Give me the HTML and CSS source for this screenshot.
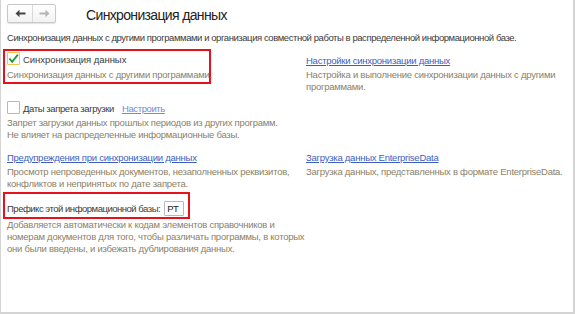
FILE: index.html
```html
<!DOCTYPE html>
<html lang="ru">
<head>
  <meta charset="UTF-8">
  <title>Синхронизация данных</title>
  <link rel="stylesheet" href="styles.css">
</head>
<body>
  <div class="window">
    <!-- Шапка формы -->
    <div class="header">
      <div class="nav">
        <button class="nav-btn">
          <svg width="11" height="9" viewBox="0 0 11 9"><path d="M0.5 4.5 L4.5 0.8 L4.5 3.4 L10.5 3.4 L10.5 5.6 L4.5 5.6 L4.5 8.2 Z" fill="#444"/></svg>
        </button>
        <button class="nav-btn">
          <svg width="11" height="9" viewBox="0 0 11 9"><path d="M10.5 4.5 L6.5 0.8 L6.5 3.6 L0.5 3.6 L0.5 5.4 L6.5 5.4 L6.5 8.2 Z" fill="#b5b5b5"/></svg>
        </button>
      </div>
      <h1>Синхронизация данных</h1>
    </div>

    <p class="intro">Синхронизация данных с другими программами и организация совместной работы в распределенной информационной базе.</p>

    <div class="grid">
      <div class="cell">
        <div class="highlight hl-sync">
          <label class="check">
            <span class="box checked">
              <svg width="12" height="11" viewBox="0 0 12 11"><path d="M1.5 5.5 L4.5 9 L10.8 1.2" fill="none" stroke="#1d9b3a" stroke-width="2"/></svg>
            </span>
            <span class="check-label">Синхронизация данных</span>
          </label>
          <p class="note">Синхронизация данных с другими программами.</p>
        </div>
      </div>
      <div class="cell">
        <a href="#" class="link">Настройки синхронизации данных</a>
        <p class="note">Настройка и выполнение синхронизации данных с другими<br>программами.</p>
      </div>

      <div class="cell row2">
        <div class="check">
          <span class="box"></span>
          <span class="check-label tight">Даты запрета загрузки</span>
          <a href="#" class="link light">Настроить</a>
        </div>
        <p class="note">Запрет загрузки данных прошлых периодов из других программ.<br>Не влияет на распределенные информационные базы.</p>
      </div>
      <div class="cell row2"></div>

      <div class="cell row3">
        <a href="#" class="link">Предупреждения при синхронизации данных</a>
        <p class="note">Просмотр непроведенных документов, незаполненных реквизитов,<br>конфликтов и непринятых по дате запрета.</p>
      </div>
      <div class="cell row3">
        <a href="#" class="link">Загрузка данных EnterpriseData</a>
        <p class="note">Загрузка данных, представленных в формате EnterpriseData.</p>
      </div>

      <div class="cell row4 wide">
        <div class="highlight hl-prefix">
          <span class="prefix-label">Префикс этой информационной базы:</span>
          <input type="text" class="prefix" value="РТ">
        </div>
        <p class="note">Добавляется автоматически к кодам элементов справочников и<br>номерам документов для того, чтобы различать программы, в которых<br>они были введены, и избежать дублирования данных.</p>
      </div>
    </div>
  </div>
</body>
</html>
```

FILE: styles.css
```css
* { box-sizing: border-box; margin: 0; padding: 0; }

body {
  font-family: 'Liberation Sans', Arial, sans-serif;
  font-size: 9.5px;
  letter-spacing: -0.25px;
  color: #3b3b3b;
  background: #fff;
}

/* Окно формы */
.window {
  width: 575px;
  height: 314px;
  border-left: 1px solid #d4d4d4;
  border-right: 2px solid #d4d4d4;
  border-bottom: 2px solid #d4d4d4;
  padding: 4px 0 0 6px;
}

.header {
  display: flex;
  align-items: center;
}

.nav {
  display: flex;
  border: 1px solid #c8c8c8;
  border-radius: 2px;
  box-shadow: 0 1px 1px rgba(0, 0, 0, 0.12);
  background: linear-gradient(#fff, #f2f2f2);
}

.nav-btn {
  width: 24px;
  height: 17px;
  border: none;
  background: transparent;
  display: flex;
  align-items: center;
  justify-content: center;
}

.nav-btn + .nav-btn {
  width: 23px;
  border-left: 1px solid #d8d8d8;
}

h1 {
  font-size: 14px;
  letter-spacing: -0.65px;
  font-weight: normal;
  color: #222;
  margin-left: 30px;
  padding-top: 3px;
}

.intro {
  margin-top: 9px;
  line-height: 12px;
  letter-spacing: -0.43px;
  white-space: nowrap;
}

.grid {
  display: grid;
  grid-template-columns: 299px 1fr;
  margin-top: 5px;
}

.cell {
  padding-right: 10px;
  white-space: nowrap;
}

.wide { grid-column: 1 / 3; }

.highlight {
  border: 2px solid #e8101a;
  margin-left: -4px;
  padding-left: 2px;
}

.hl-sync {
  width: 208px;
  padding-top: 1px;
  padding-bottom: 1px;
}

.hl-sync .note { margin-top: 4px; }

.check {
  display: flex;
  align-items: center;
  gap: 3px;
  height: 13px;
}

.check-label {
  font-size: 9.5px;
  letter-spacing: -0.05px;
  padding-top: 2px;
}

.check-label.tight {
  letter-spacing: -0.4px;
}

.box {
  width: 13px;
  height: 13px;
  border: 1px solid #b8b8b8;
  border-radius: 1px;
  display: flex;
  align-items: center;
  justify-content: center;
}

.box.checked {
  border-color: #f1c64b;
}

.note {
  color: #8c7f68;
  line-height: 12px;
  margin-top: 2px;
}

.link {
  color: #3b5fbf;
  text-decoration: underline;
  display: inline-block;
  margin-top: 5px;
  line-height: 13px;
}

.link.light {
  color: #6f8ad6;
  margin: 2px 0 0 5px;
  letter-spacing: -0.4px;
}

.row2 { margin-top: 8px; }
.row2 .note { margin-top: 3px; }
.row3 { margin-top: 5px; }
.row4 { margin-top: 2px; }

.hl-prefix {
  width: 187px;
  height: 27px;
  display: flex;
  align-items: flex-end;
  gap: 4px;
  padding-bottom: 1px;
}

.prefix-label {
  line-height: 15px;
  letter-spacing: -0.48px;
}

.prefix {
  width: 20px;
  height: 15px;
  border: 1px solid #b8b8b8;
  border-radius: 1px;
  font: inherit;
  padding-left: 2px;
  color: #222;
}

.row4 .note { margin-top: 0; }
```
